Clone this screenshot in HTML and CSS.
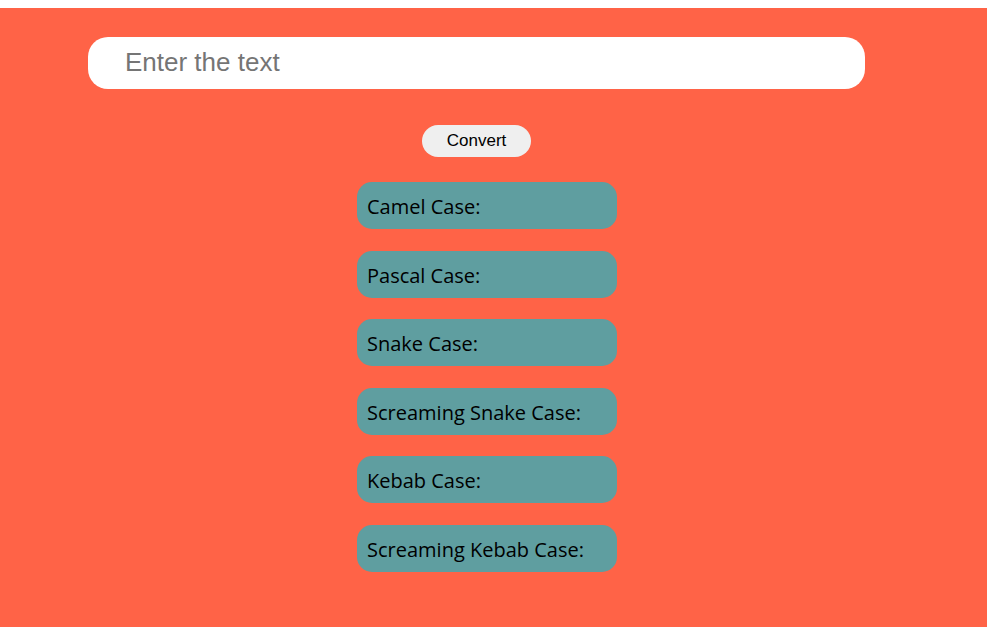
FILE: index.html
```html
<!DOCTYPE html>
<html lang="en">
<head>
<meta charset="utf-8">
<title>Case Converter</title>
<link rel="stylesheet" href="styles.css">
</head>
<body>
<main class="app">
  <div class="form">
    <input class="text-input" type="text" placeholder="Enter the text">
    <button class="convert-btn" type="button">Convert</button>
  </div>
  <div class="results">
    <div class="result">Camel Case:</div>
    <div class="result">Pascal Case:</div>
    <div class="result">Snake Case:</div>
    <div class="result">Screaming Snake Case:</div>
    <div class="result">Kebab Case:</div>
    <div class="result">Screaming Kebab Case:</div>
  </div>
</main>
</body>
</html>
```
FILE: styles.css
```css
html, body {
  margin: 0;
  padding: 0;
  background: #ffffff;
}
body {
  padding-top: 8px;
}
.app {
  background: #ff6347;
  height: 619px;
  box-sizing: border-box;
  padding-top: 29px;
}
.form {
  width: 777px;
  margin-left: 88px;
  display: flex;
  flex-direction: column;
  align-items: center;
}
.text-input {
  width: 100%;
  height: 52px;
  box-sizing: border-box;
  border: none;
  outline: none;
  border-radius: 20px;
  background: #fff;
  padding: 0 0 2px 37px;
  font-family: "Liberation Sans", Arial, sans-serif;
  font-size: 26px;
  color: #000;
}
.text-input::placeholder {
  color: #757575;
}
.convert-btn {
  margin-top: 36px;
  width: 109px;
  height: 32px;
  border: none;
  border-radius: 16px;
  background: #efefef;
  font-family: "Liberation Sans", Arial, sans-serif;
  font-size: 17px;
  color: #000;
  padding: 0;
}
.results {
  margin-left: 357px;
  margin-top: 25px;
  width: 260px;
  display: flex;
  flex-direction: column;
  gap: 21.6px;
}
.result {
  height: 47px;
  box-sizing: border-box;
  background: #5f9ea0;
  border-radius: 15px;
  padding: 2px 0 0 10px;
  display: flex;
  align-items: center;
  font-family: "Open Sans", "Noto Sans", sans-serif;
  font-size: 20px;
  color: #000;
}
```
